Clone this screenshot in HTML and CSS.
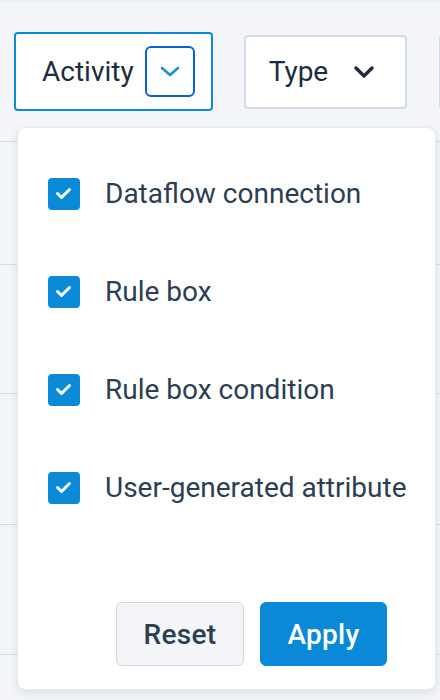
FILE: index.html
```html
<!DOCTYPE html>
<html lang="en">
<head>
<meta charset="utf-8">
<title>Activity filter</title>
<link rel="stylesheet" href="styles.css">
</head>
<body>
<div class="page">
  <div class="filters">
    <div class="filter-row">
      <button class="filter filter-active">
        <span class="filter-label">Activity</span>
        <span class="chev-box chev-box-focus">
          <svg class="chev chev-blue" viewBox="0 0 20 12" width="20" height="12"><path d="M2 2 L10 9 L18 2"/></svg>
        </span>
      </button>
      <button class="filter">
        <span class="filter-label">Type</span>
        <span class="chev-box">
          <svg class="chev chev-dark" viewBox="0 0 20 12" width="20" height="12"><path d="M2 2 L10 10 L18 2"/></svg>
        </span>
      </button>
      <button class="filter filter-more" aria-label="More filters"></button>
    </div>
  </div>
  <div class="table">
    <div class="row row-1"></div>
    <div class="row row-2"></div>
    <div class="row row-3"></div>
    <div class="row row-4"></div>
  </div>

  <div class="menu">
    <ul class="options">
      <li class="option">
        <span class="checkbox"><svg viewBox="0 0 32 32" width="32" height="32"><path d="M9.5 15.5 L13.5 19.5 L21.5 11.5"/></svg></span>
        <span class="option-label">Dataflow connection</span>
      </li>
      <li class="option">
        <span class="checkbox"><svg viewBox="0 0 32 32" width="32" height="32"><path d="M9.5 15.5 L13.5 19.5 L21.5 11.5"/></svg></span>
        <span class="option-label">Rule box</span>
      </li>
      <li class="option">
        <span class="checkbox"><svg viewBox="0 0 32 32" width="32" height="32"><path d="M9.5 15.5 L13.5 19.5 L21.5 11.5"/></svg></span>
        <span class="option-label">Rule box condition</span>
      </li>
      <li class="option">
        <span class="checkbox"><svg viewBox="0 0 32 32" width="32" height="32"><path d="M9.5 15.5 L13.5 19.5 L21.5 11.5"/></svg></span>
        <span class="option-label">User-generated attribute</span>
      </li>
    </ul>
    <div class="actions">
      <button class="btn btn-reset">Reset</button>
      <button class="btn btn-apply">Apply</button>
    </div>
  </div>
</div>
</body>
</html>
```

FILE: styles.css
```css
* {
  box-sizing: border-box;
}

html, body {
  margin: 0;
  padding: 0;
  height: 100%;
  overflow: hidden;
}

body {
  background: #f3f5f8;
  font-family: Roboto, "Noto Sans", Arial, sans-serif;
  color: #1c2b3d;
}

.page {
  position: relative;
  height: 700px;
  overflow: hidden;
  border-top: 2px solid #eceff3;
}

.filters {
  height: 140px;
  padding: 30px 0 0 14px;
  border-bottom: 1px solid #d6dbe3;
  overflow: hidden;
}

.filter-row {
  display: flex;
  align-items: center;
  gap: 31px;
  height: 79px;
  white-space: nowrap;
}

.filter {
  display: flex;
  align-items: center;
  flex-shrink: 0;
  height: 74px;
  padding: 0 16px 0 23px;
  background: #ffffff;
  border: 2px solid #d3dbe5;
  border-radius: 4px;
  font-family: inherit;
  font-size: 28px;
  color: #1c2b3d;
  gap: 11px;
}

.filter-active {
  height: 79px;
  padding: 0 16px 0 26px;
  gap: 11px;
  border: 2px solid #0b8ad7;
}

.filter-more {
  width: 120px;
  margin-left: 1px;
}

.filter-label {
  line-height: 1;
}

.chev-box {
  display: flex;
  align-items: center;
  justify-content: center;
  width: 50px;
  height: 50px;
  border: 2px solid transparent;
  border-radius: 6px;
}

.chev-box-focus {
  height: 51px;
  border: 2.5px solid #0a62d0;
}

.chev {
  fill: none;
  stroke-linecap: round;
  stroke-linejoin: round;
}

.chev-blue {
  stroke: #1a8ddb;
  stroke-width: 2.6;
}

.chev-dark {
  stroke: #1e2d3e;
  stroke-width: 3.4;
}

.table {
  display: flex;
  flex-direction: column;
}

.row {
  border-bottom: 1px solid #d6dbe3;
}

.row-1 { height: 123px; }
.row-2 { height: 129px; }
.row-3 { height: 131px; }
.row-4 { height: 130px; }

.menu {
  position: absolute;
  left: 17px;
  top: 125px;
  width: 419px;
  height: 563px;
  background: #ffffff;
  border: 1px solid #e7eaef;
  border-radius: 8px;
  box-shadow: 0 3px 8px rgba(30, 45, 65, 0.10);
  display: flex;
  flex-direction: column;
  padding: 17px 48px 23px 30px;
}

.options {
  list-style: none;
  margin: 0;
  padding: 0;
}

.option {
  display: flex;
  align-items: center;
  gap: 25px;
  height: 98px;
}

.checkbox {
  display: block;
  width: 32px;
  height: 32px;
  border-radius: 4px;
  background: #0a8ad7;
  flex-shrink: 0;
}

.checkbox svg {
  display: block;
  fill: none;
  stroke: #ffffff;
  stroke-width: 3;
  stroke-linecap: round;
  stroke-linejoin: round;
}

.option-label {
  font-size: 28px;
  color: #2d3e52;
  white-space: nowrap;
  line-height: 1;
}

.actions {
  margin-top: auto;
  display: flex;
  justify-content: flex-end;
  gap: 16px;
}

.btn {
  height: 64px;
  border-radius: 6px;
  font-family: inherit;
  font-size: 28px;
  font-weight: 500;
  letter-spacing: 0.3px;
}

.btn-reset {
  width: 128px;
  background: #f3f5f8;
  border: 1px solid #cfd7e1;
  color: #2d3e52;
}

.btn-apply {
  width: 127px;
  background: #0a89d6;
  border: 1px solid #0a89d6;
  color: #ffffff;
}
```
